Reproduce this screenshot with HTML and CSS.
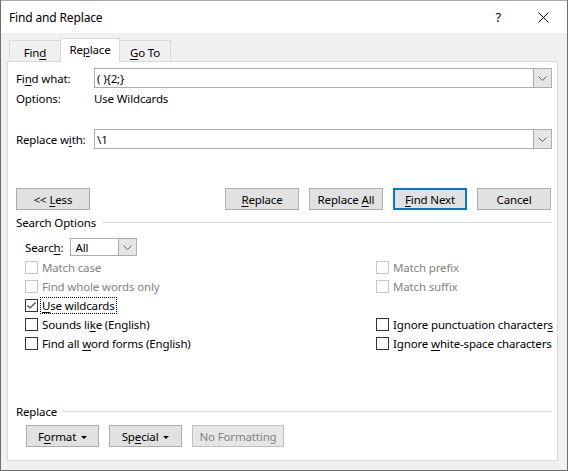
FILE: index.html
```html
<!DOCTYPE html>
<html lang="en">
<head>
    <meta charset="UTF-8">
    <title>Find and Replace</title>
    <link rel="stylesheet" href="styles.css">
</head>
<body>
    <div class="window">
        <div class="titlebar">
            <span class="title">Find and Replace</span>
            <span class="help">?</span>
            <svg class="close" width="11" height="11" viewBox="0 0 11 11">
                <path d="M0.5 0.5L10.5 10.5M10.5 0.5L0.5 10.5" stroke="#000" stroke-width="1"/>
            </svg>
        </div>

        <div class="dialog">
            <div class="tabs">
                <div class="tab tab-find"><span>Fin<u>d</u></span></div>
                <div class="tab tab-active"><span>Re<u>p</u>lace</span></div>
                <div class="tab tab-goto"><span><u>G</u>o To</span></div>
            </div>

            <div class="panel">
                <div class="field">
                    <label class="field-label">Fi<u>n</u>d what:</label>
                    <div class="combo">
                        <span class="combo-text">( ){2;}</span>
                        <span class="combo-btn">
                            <svg width="9" height="5" viewBox="0 0 9 5"><path d="M0.5 0.5L4.5 4.5L8.5 0.5" fill="none" stroke="#606060"/></svg>
                        </span>
                    </div>
                </div>
                <div class="options-row">
                    <span class="field-label">Options:</span>
                    <span>Use Wildcards</span>
                </div>
                <div class="field field-replace">
                    <label class="field-label">Replace w<u>i</u>th:</label>
                    <div class="combo">
                        <span class="combo-text">\1</span>
                        <span class="combo-btn">
                            <svg width="9" height="5" viewBox="0 0 9 5"><path d="M0.5 0.5L4.5 4.5L8.5 0.5" fill="none" stroke="#606060"/></svg>
                        </span>
                    </div>
                </div>

                <div class="button-row">
                    <button class="btn">&lt;&lt; <u>L</u>ess</button>
                    <div class="button-group">
                        <button class="btn"><u>R</u>eplace</button>
                        <button class="btn">Replace <u>A</u>ll</button>
                        <button class="btn btn-default"><u>F</u>ind Next</button>
                        <button class="btn">Cancel</button>
                    </div>
                </div>

                <div class="section-title">Search Options</div>

                <div class="search-row">
                    <label>Searc<u>h</u>:</label>
                    <div class="combo combo-small">
                        <span class="combo-text">All</span>
                        <span class="combo-btn">
                            <svg width="9" height="5" viewBox="0 0 9 5"><path d="M0.5 0.5L4.5 4.5L8.5 0.5" fill="none" stroke="#606060"/></svg>
                        </span>
                    </div>
                </div>

                <div class="checks">
                    <div class="check disabled"><span class="box"></span><span>Match case</span></div>
                    <div class="check disabled"><span class="box"></span><span>Match prefix</span></div>
                    <div class="check disabled"><span class="box"></span><span>Find whole words only</span></div>
                    <div class="check disabled"><span class="box"></span><span>Match suffix</span></div>
                    <div class="check">
                        <span class="box">
                            <svg width="11" height="11" viewBox="0 0 11 11"><path d="M1.5 5.5L4 8L9.5 2.5" fill="none" stroke="#404040" stroke-width="1.2"/></svg>
                        </span>
                        <span class="focus"><u>U</u>se wildcards</span>
                    </div>
                    <div class="check empty"></div>
                    <div class="check"><span class="box"></span><span>Sounds li<u>k</u>e (English)</span></div>
                    <div class="check"><span class="box"></span><span>Ignore punctuation character<u>s</u></span></div>
                    <div class="check"><span class="box"></span><span>Find all <u>w</u>ord forms (English)</span></div>
                    <div class="check"><span class="box"></span><span>Ignore <u>w</u>hite-space characters</span></div>
                </div>

                <div class="section-title section-replace">Replace</div>

                <div class="format-row">
                    <button class="btn">F<u>o</u>rmat <span class="arrow"></span></button>
                    <button class="btn">Sp<u>e</u>cial <span class="arrow"></span></button>
                    <button class="btn btn-wide" disabled>No Formatting</button>
                </div>
            </div>
        </div>
    </div>
</body>
</html>
```

FILE: styles.css
```css
* {
    box-sizing: border-box;
}
body {
    margin: 0;
    font-family: "Noto Sans", "Open Sans", sans-serif;
    font-size: 11.5px;
    letter-spacing: -0.15px;
    color: #000;
    background: #fff;
}
u {
    text-decoration: underline;
    text-underline-offset: 2px;
}
.window {
    width: 568px;
    height: 471px;
    border: 1px solid #6e6e6e;
    border-top-color: #a8a8a8;
    background: #f0f0f0;
    display: flex;
    flex-direction: column;
}
.titlebar {
    height: 32px;
    background: #fff;
    display: flex;
    align-items: center;
    padding-left: 8px;
}
.title {
    flex: 1;
    font-size: 12px;
}
.help {
    font-size: 13px;
    margin-right: 37px;
}
.close {
    margin-right: 18px;
}
.dialog {
    padding-left: 6px;
}
.tabs {
    display: flex;
    align-items: flex-end;
    height: 28px;
    margin-left: 2px;
}
.tab {
    height: 21px;
    border: 1px solid #d9d9d9;
    border-bottom: none;
    background: #f0f0f0;
    display: flex;
    align-items: center;
    justify-content: center;
    padding-top: 3px;
}
.tab-find {
    width: 51px;
    border-right: none;
}
.tab-goto {
    width: 51px;
    border-left: none;
}
.tab-active {
    width: 60px;
    height: 24px;
    margin-bottom: -1px;
    background: #fff;
    position: relative;
    z-index: 1;
    padding-top: 0;
    padding-bottom: 2px;
}
.panel {
    width: 551px;
    height: 400px;
    border: 1px solid #d9d9d9;
    background: #fff;
    padding: 6px 5px 0 8px;
}
.field {
    display: flex;
    align-items: center;
    height: 20px;
}
.field-label {
    width: 78px;
    flex-shrink: 0;
}
.combo {
    flex: 1;
    height: 20px;
    border: 1px solid #adadad;
    display: flex;
    align-items: center;
}
.combo-text {
    flex: 1;
    padding-left: 2px;
}
.combo-btn {
    width: 18px;
    height: 100%;
    background: #e6e6e6;
    border-left: 1px solid #adadad;
    display: flex;
    align-items: center;
    justify-content: center;
}
.options-row {
    display: flex;
    height: 20px;
    align-items: center;
}
.field-replace {
    margin-top: 21px;
}
.button-row {
    display: flex;
    justify-content: space-between;
    margin-top: 39px;
    padding-right: 1px;
}
.button-group {
    display: flex;
    gap: 10px;
}
.btn {
    width: 74px;
    height: 22px;
    border: 1px solid #adadad;
    background: #e1e1e1;
    font-family: inherit;
    font-size: 11.5px;
    letter-spacing: -0.15px;
    color: #000;
    padding: 0;
}
.btn-default {
    border: 2px solid #0078d7;
}
.btn:disabled {
    color: #838383;
    border-color: #bfbfbf;
    background: #e6e6e6;
}
.section-title {
    display: flex;
    align-items: center;
    height: 16px;
    margin-top: 4px;
}
.section-title::after {
    content: "";
    flex: 1;
    border-top: 1px solid #dcdcdc;
    margin-left: 6px;
}
.search-row {
    display: flex;
    align-items: center;
    gap: 7px;
    margin-top: 8px;
    margin-left: 9px;
}
.combo-small {
    flex: none;
    width: 67px;
    height: 18px;
}
.combo-small .combo-text {
    padding-left: 4px;
}
.checks {
    display: grid;
    grid-template-columns: 351px auto;
    grid-auto-rows: 19px;
    margin-top: 2px;
    margin-left: 9px;
}
.check {
    display: flex;
    align-items: center;
    gap: 4px;
    white-space: nowrap;
}
.box {
    width: 13px;
    height: 13px;
    border: 1px solid #333;
    background: #fff;
    display: flex;
    align-items: center;
    justify-content: center;
    flex-shrink: 0;
}
.disabled {
    color: #838383;
}
.disabled .box {
    border-color: #c6c6c6;
}
.focus {
    outline: 1px dotted #000;
    outline-offset: 0;
    margin-left: -1px;
    padding: 0 1px;
    line-height: 15px;
}
.section-replace {
    margin-top: 50px;
}
.format-row {
    display: flex;
    gap: 10px;
    margin-top: 6px;
    margin-left: 10px;
}
.format-row .btn {
    width: 73px;
}
.format-row .btn-wide {
    width: 92px;
}
.arrow {
    display: inline-block;
    width: 0;
    height: 0;
    border-left: 3px solid transparent;
    border-right: 3px solid transparent;
    border-top: 3px solid #000;
    vertical-align: middle;
    margin-left: 2px;
}
```
